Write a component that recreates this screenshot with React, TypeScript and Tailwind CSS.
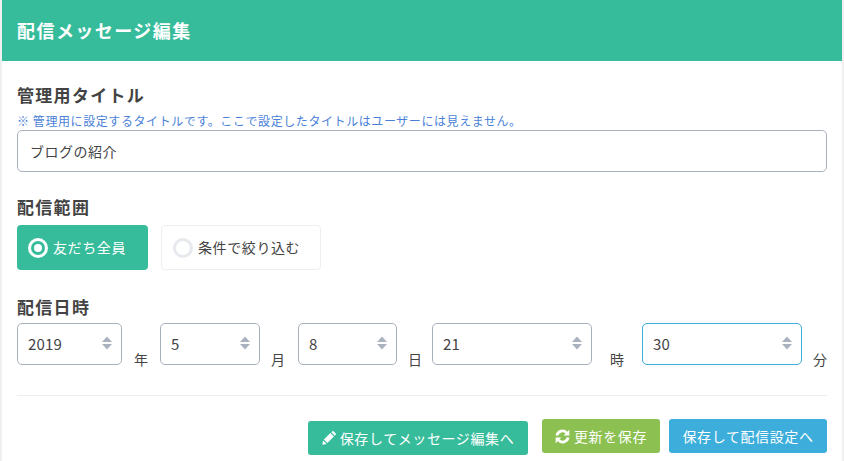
import React from "react";

const font = { fontFamily: '"Noto Sans CJK JP", sans-serif' };

function Field({ value, label, boxW, gapL, labelW, focus }: { value: string; label: string; boxW: string; gapL: string; labelW: string; focus?: boolean }) {
  return (
    <div className="flex items-end">
      <div className={`${boxW} h-[42px] flex items-center justify-between pl-[10px] pr-[9px] bg-white rounded-[5px] border ${focus ? "border-[#3daedb]" : "border-[#a9b0bd]"} text-[15px] tracking-[0.2px] text-[#444]`}>
        <span>{value}</span>
        <svg width="10" height="14" viewBox="0 0 10 14" className="mb-[2px]">
          <path d="M5 0.5 L10 6 H0 Z" fill="#aab1bf" />
          <path d="M0 8 H10 L5 13.5 Z" fill="#aab1bf" />
        </svg>
      </div>
      <span className={`${gapL} ${labelW} text-[14px] leading-[18px] mb-[-3px] text-[#444] whitespace-nowrap`}>{label}</span>
    </div>
  );
}

export default function App() {
  return (
    <div style={font} className="w-[844px] h-[461px] overflow-hidden bg-white">
      <div className="mx-[2px] h-full bg-white shadow-[0_0_0_2px_#f0f0f0]">
        <div className="h-[61px] bg-[#37bc9b] flex items-center pl-[15px] text-white text-[18px] tracking-[1.45px] font-bold">
          配信メッセージ編集
        </div>
        <div className="px-[15px]">
          <h2 className="mt-[21px] text-[17px] tracking-[1.3px] leading-[26px] font-bold text-[#434343]">管理用タイトル</h2>
          <p className="mt-[5px] text-[12px] tracking-[0.58px] leading-[16px] text-[#4a7fd8] whitespace-nowrap">※ 管理用に設定するタイトルです。ここで設定したタイトルはユーザーには見えません。</p>
          <div className="mt-[1px] h-[42px] flex items-center px-[12px] bg-white rounded-[5px] border border-[#a9b0bd] text-[14px] tracking-[0.5px] text-[#444]">
            ブログの紹介
          </div>

          <h2 className="mt-[22px] text-[17px] tracking-[1.3px] leading-[26px] font-bold text-[#434343]">配信範囲</h2>
          <div className="mt-[5px] flex gap-[13px] text-[14px] tracking-[0.6px]">
            <div className="w-[131px] h-[45px] flex items-center gap-[5px] pl-[11px] rounded-[4px] bg-[#37bc9b] text-white">
              <span className="w-[20px] h-[20px] rounded-full border-[3px] border-white flex items-center justify-center">
                <span className="w-[8px] h-[8px] rounded-full bg-white" />
              </span>
              友だち全員
            </div>
            <div className="w-[160px] h-[45px] flex items-center gap-[5px] pl-[11px] rounded-[4px] bg-white border border-[#eceef2] text-[#444]">
              <span className="w-[20px] h-[20px] rounded-full border-[3px] border-[#e6e9ee] bg-white" />
              条件で絞り込む
            </div>
          </div>

          <h2 className="mt-[24px] text-[17px] tracking-[1.3px] leading-[26px] font-bold text-[#434343]">配信日時</h2>
          <div className="mt-[3px] flex">
            <Field value="2019" label="年" boxW="w-[105px]" gapL="ml-[12px]" labelW="w-[26px]" />
            <Field value="5" label="月" boxW="w-[100px]" gapL="ml-[11px]" labelW="w-[27px]" />
            <Field value="8" label="日" boxW="w-[99px]" gapL="ml-[11px]" labelW="w-[24px]" />
            <Field value="21" label="時" boxW="w-[160px]" gapL="ml-[18px]" labelW="w-[32px]" />
            <Field value="30" label="分" boxW="w-[160px]" gapL="ml-[11px]" labelW="w-[14px]" focus />
          </div>

          <div className="mt-[30px] border-t border-[#eeeeee]" />

          <div className="mt-[23px] flex justify-end items-start text-white text-[14px] tracking-[0.6px]">
            <div className="mt-[2px] w-[220px] h-[34px] flex items-center justify-center gap-[4px] rounded-[3px] bg-[#37bc9b]">
              <svg width="14" height="14" viewBox="0 0 14 14" fill="#fff">
                <path d="M0.3 13.7 L1.1 9.4 L4.6 12.9 Z" />
                <path d="M1.9 8.6 L8.4 2.1 L11.9 5.6 L5.4 12.1 Z" />
                <path d="M9.3 1.2 L10.2 0.4 Q11 -0.2 11.8 0.4 L13.6 2.2 Q14.2 3 13.6 3.8 L12.8 4.7 Z" />
              </svg>
              保存してメッセージ編集へ
            </div>
            <div className="ml-[14px] w-[118px] h-[34px] flex items-center justify-center gap-[4px] rounded-[3px] bg-[#8cc152]">
              <svg width="15" height="15" viewBox="0 0 14 14" fill="none" stroke="#fff" strokeWidth="2.6">
                <path d="M1.8 6 A5.2 5.2 0 0 1 10.8 3.6" />
                <path d="M12.2 8 A5.2 5.2 0 0 1 3.2 10.4" />
                <path d="M13.4 0.6 V6 H8 Z" fill="#fff" stroke="none" />
                <path d="M0.6 13.4 V8 H6 Z" fill="#fff" stroke="none" />
              </svg>
              更新を保存
            </div>
            <div className="ml-[9px] w-[158px] h-[34px] flex items-center justify-center rounded-[3px] bg-[#3daedb]">
              保存して配信設定へ
            </div>
          </div>
        </div>
      </div>
    </div>
  );
}
